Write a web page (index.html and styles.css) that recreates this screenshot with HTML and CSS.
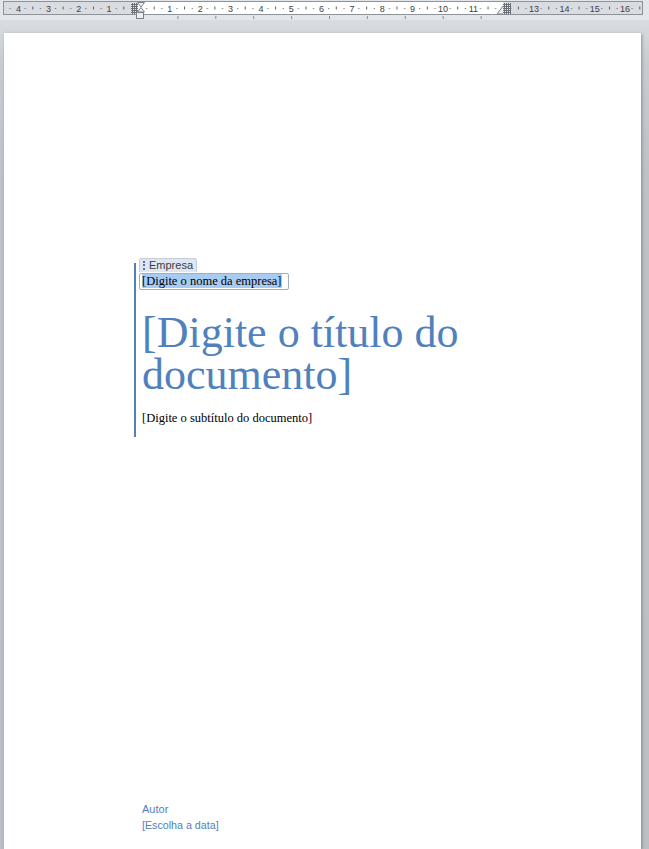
FILE: index.html
```html
<!DOCTYPE html>
<html lang="pt">
<head>
<meta charset="utf-8">
<title>Documento</title>
<link rel="stylesheet" href="styles.css">
</head>
<body>
<div class="ruler">
  <svg width="649" height="20" viewBox="0 0 649 20" xmlns="http://www.w3.org/2000/svg">
    <defs>
      <pattern id="marks" x="139" y="0" width="30.35" height="20" patternUnits="userSpaceOnUse">
        <rect x="7.1" y="8" width="1" height="1" fill="#5a5e64"/>
        <rect x="14.7" y="6.5" width="1" height="3" fill="#5a5e64"/>
        <rect x="22.3" y="8" width="1" height="1" fill="#5a5e64"/>
      </pattern>
      <pattern id="tabs" x="139.5" y="0" width="37.9" height="20" patternUnits="userSpaceOnUse">
        <rect x="0" y="16" width="1" height="3" fill="#8a8f96"/>
      </pattern>
      <pattern id="grid" x="0" y="0" width="2" height="2" patternUnits="userSpaceOnUse">
        <rect x="0" y="0" width="2" height="1" fill="#6b7077"/>
        <rect x="0" y="0" width="1" height="2" fill="#6b7077"/>
      </pattern>
    </defs>
    <rect x="3.5" y="1.5" width="639" height="13" fill="#d9dde2" stroke="#8e939a"/>
    <rect x="138" y="2" width="365" height="12" fill="#ffffff"/>
    <rect x="4" y="2" width="638" height="12" fill="url(#marks)"/>
    <rect x="170" y="15" width="316" height="5" fill="url(#tabs)"/>
    <g class="nums" font-family="Liberation Sans, Arial, sans-serif" font-size="9" fill="#3b3f45" text-anchor="middle">
      <text x="18.6" y="11.5">4</text>
      <text x="48.5" y="11.5">3</text>
      <text x="78.8" y="11.5">2</text>
      <text x="109.1" y="11.5">1</text>
      <text x="169.8" y="11.5">1</text>
      <text x="200.2" y="11.5">2</text>
      <text x="230.5" y="11.5">3</text>
      <text x="260.9" y="11.5">4</text>
      <text x="291.2" y="11.5">5</text>
      <text x="321.6" y="11.5">6</text>
      <text x="351.9" y="11.5">7</text>
      <text x="382.3" y="11.5">8</text>
      <text x="412.6" y="11.5">9</text>
      <text x="443" y="11.5">10</text>
      <text x="473.3" y="11.5">11</text>
      <text x="534" y="11.5">13</text>
      <text x="564.4" y="11.5">14</text>
      <text x="594.7" y="11.5">15</text>
      <text x="625.1" y="11.5">16</text>
    </g>
    <rect x="131" y="3" width="7" height="11" fill="#e6e8eb"/>
    <rect x="131" y="3" width="7" height="11" fill="url(#grid)"/>
    <polygon points="137.5,2.5 144.5,2.5 141,7" fill="#f2f3f5" stroke="#7d828a"/>
    <polygon points="141,7.5 137.5,12 144.5,12" fill="#f2f3f5" stroke="#7d828a"/>
    <rect x="136.5" y="12.5" width="7" height="6" fill="#eceef1" stroke="#7d828a"/>
    <polygon points="497,14 503,6 509,14" fill="#e9ebee" stroke="#7d828a"/>
    <rect x="503" y="3" width="8" height="11" fill="#e6e8eb"/>
    <rect x="503" y="3" width="8" height="11" fill="url(#grid)"/>
  </svg>
</div>
<div class="workspace">
  <div class="page">
    <div class="cover">
      <div class="tag"><span class="grip"></span>Empresa</div>
      <div class="company"><span class="sel">[Digite o nome da empresa]</span></div>
      <h1 class="title">[Digite o título do documento]</h1>
      <p class="subtitle">[Digite o subtítulo do documento]</p>
    </div>
    <div class="meta">
      <div class="author">Autor</div>
      <div class="date">[Escolha a data]</div>
    </div>
  </div>
</div>
</body>
</html>
```
FILE: styles.css
```css
html, body {
  margin: 0;
  padding: 0;
}

body {
  width: 649px;
  height: 849px;
  overflow: hidden;
  background: #c1c5cb;
  font-family: "Liberation Sans", Arial, sans-serif;
}

.ruler {
  height: 20px;
  background: #e3e6ea;
}

.ruler svg {
  display: block;
}

.workspace {
  padding: 13px 8px 0 4px;
  height: 816px;
  background: linear-gradient(to bottom, #d9dce1 0, #c9cdd2 40px, #bec2c8 160px, #bcc0c6 100%);
}

.page {
  width: 637px;
  height: 816px;
  background: #ffffff;
  box-shadow: 1px 1px 3px rgba(60, 65, 75, 0.45);
  padding-top: 230px;
  box-sizing: border-box;
}

.cover {
  position: relative;
  margin-left: 130px;
  border-left: 2px solid #4f81bd;
  padding: 10px 0 11px 3px;
}

.tag {
  position: absolute;
  top: -5px;
  left: 3px;
  display: flex;
  align-items: center;
  height: 14px;
  width: 58px;
  box-sizing: border-box;
  background: #dfe6f0;
  border: 1px solid #c5cfdc;
  border-bottom: none;
  border-radius: 2px 3px 0 0;
  font-size: 11px;
  line-height: 13px;
  color: #3a3d42;
  padding-left: 3px;
}

.grip {
  width: 0;
  height: 9px;
  border-left: 2px dotted #4f74b0;
  margin-right: 4px;
}

.company {
  width: 150px;
  height: 17px;
  box-sizing: border-box;
  border: 1px solid #a3adbc;
  border-radius: 2px;
  padding-left: 2px;
  font-family: "Liberation Serif", "Times New Roman", serif;
  font-size: 12.5px;
  line-height: 15px;
  color: #000;
}

.sel {
  background: #a8cbf1;
}

.title {
  margin: 22px 0 0 3px;
  font-family: "Liberation Serif", "Times New Roman", serif;
  font-weight: normal;
  font-size: 44px;
  line-height: 42px;
  color: #4f81bd;
  width: 330px;
}

.subtitle {
  margin: 15px 0 0 3px;
  font-family: "Liberation Serif", "Times New Roman", serif;
  font-size: 12.5px;
  line-height: 15px;
  color: #000;
}

.meta {
  margin: 364px 0 0 138px;
  font-size: 11px;
  line-height: 16px;
  color: #4f81bd;
}

.date {
  font-size: 10.7px;
}
```
